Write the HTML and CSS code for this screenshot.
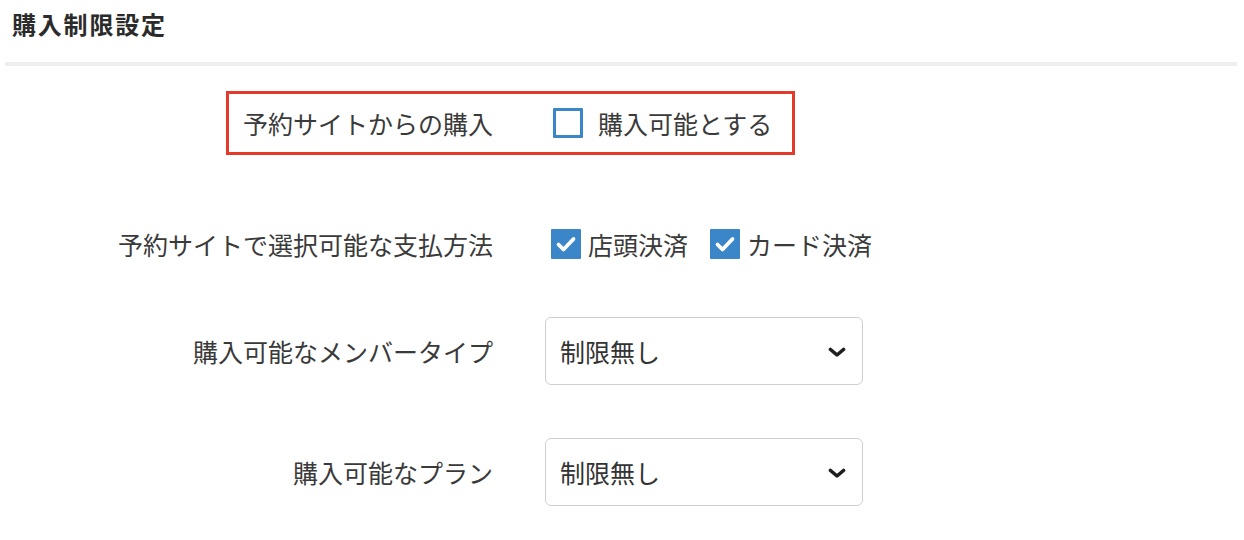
FILE: index.html
```html
<!DOCTYPE html>
<html lang="ja">
<head>
<meta charset="utf-8">
<title>購入制限設定</title>
<link rel="stylesheet" href="styles.css">
</head>
<body>
<div class="page">
  <div class="header">
    <h1 class="title">購入制限設定</h1>
  </div>
  <div class="divider"></div>

  <div class="highlight-row">
    <span class="hl-label">予約サイトからの購入</span>
    <label class="check">
      <span class="box"></span>
      <span class="check-text">購入可能とする</span>
    </label>
  </div>

  <div class="form">
    <div class="row row-pay">
      <div class="label">予約サイトで選択可能な支払方法</div>
      <div class="control checks">
        <label class="check tight">
          <span class="box checked">
            <svg viewBox="0 0 30 30" width="30" height="30"><path d="M7.5 15.5 L12.5 20.5 L22.5 10" fill="none" stroke="#fff" stroke-width="3.8" stroke-linecap="round" stroke-linejoin="round"/></svg>
          </span>
          <span class="check-text">店頭決済</span>
        </label>
        <label class="check tight">
          <span class="box checked">
            <svg viewBox="0 0 30 30" width="30" height="30"><path d="M7.5 15.5 L12.5 20.5 L22.5 10" fill="none" stroke="#fff" stroke-width="3.8" stroke-linecap="round" stroke-linejoin="round"/></svg>
          </span>
          <span class="check-text">カード決済</span>
        </label>
      </div>
    </div>

    <div class="row">
      <div class="label">購入可能なメンバータイプ</div>
      <div class="control">
        <div class="select">
          <span>制限無し</span>
          <svg class="chev" viewBox="0 0 18 10" width="18" height="10"><path d="M2.5 2.5 L9 8 L15.5 2.5" fill="none" stroke="#1f1f1f" stroke-width="3.6" stroke-linecap="round" stroke-linejoin="round"/></svg>
        </div>
      </div>
    </div>

    <div class="row">
      <div class="label">購入可能なプラン</div>
      <div class="control">
        <div class="select">
          <span>制限無し</span>
          <svg class="chev" viewBox="0 0 18 10" width="18" height="10"><path d="M2.5 2.5 L9 8 L15.5 2.5" fill="none" stroke="#1f1f1f" stroke-width="3.6" stroke-linecap="round" stroke-linejoin="round"/></svg>
        </div>
      </div>
    </div>
  </div>
</div>
</body>
</html>
```
FILE: styles.css
```css
* { box-sizing: border-box; }
html, body {
  margin: 0;
  padding: 0;
  background: #fff;
}
body {
  font-family: "Noto Sans CJK JP", "Noto Sans", sans-serif;
  color: #3a3a3a;
  font-size: 25px;
  width: 1244px;
  height: 540px;
  overflow: hidden;
}
.header {
  height: 62px;
  padding: 6px 12px 0;
}
.title {
  margin: 0;
  font-size: 24px;
  letter-spacing: 1.8px;
  font-weight: 700;
  line-height: 36px;
  color: #2b2b2b;
}
.divider {
  margin: 0 7px 0 5px;
  height: 4px;
  background: #eeeeee;
}
.highlight-row {
  margin: 25px 0 0 226px;
  width: 569px;
  height: 64px;
  border: 3px solid #e4392b;
  display: flex;
  align-items: center;
  padding-left: 14px;
}
.hl-label {
  width: 250px;
  margin-right: 60px;
  white-space: nowrap;
}
.check {
  display: flex;
  align-items: center;
  gap: 15px;
  white-space: nowrap;
}
.check.tight { gap: 7px; }
.box {
  width: 30px;
  height: 30px;
  border: 3px solid #3a86c8;
  border-radius: 1px;
  background: #fff;
  display: block;
  flex: none;
}
.box.checked {
  border: none;
  background: #3a86c8;
}
.box svg { display: block; }
.check-text { line-height: 36px; }
.form {
  display: flex;
  flex-direction: column;
  gap: 53px;
  margin-top: 69px;
}
.row {
  display: grid;
  grid-template-columns: 493px 1fr;
  column-gap: 52px;
  align-items: center;
}
.row-pay { height: 40px; }
.label {
  text-align: right;
  white-space: nowrap;
  line-height: 36px;
}
.checks {
  display: flex;
  align-items: center;
  gap: 22px;
  padding-left: 6px;
}
.select {
  width: 318px;
  height: 68px;
  border: 1.5px solid #cfcfcf;
  border-radius: 6px;
  background: #fff;
  display: flex;
  align-items: center;
  justify-content: space-between;
  padding: 0 16px 0 14px;
  color: #333;
}
.chev { display: block; margin-top: 1px; }
```
